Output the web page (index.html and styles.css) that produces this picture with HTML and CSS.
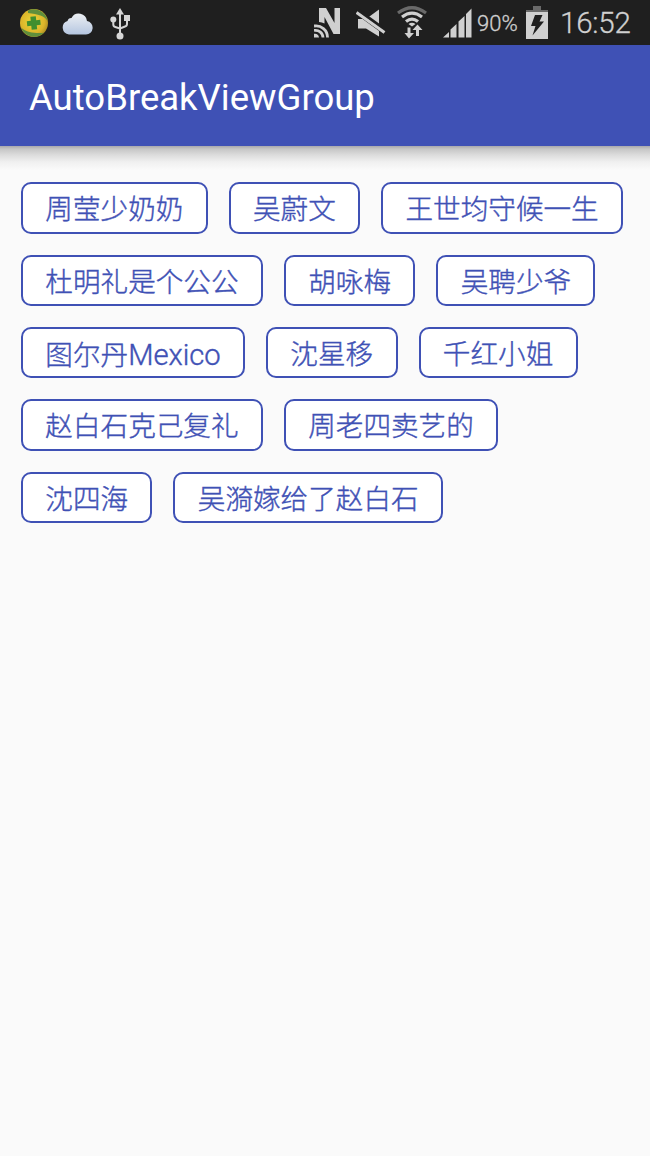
FILE: index.html
```
<!DOCTYPE html>
<html lang="zh-CN">

<head>
    <meta charset="UTF-8">
    <meta name="viewport" content="width=device-width, initial-scale=1.0">
    <title>AutoBreakViewGroup</title>
    <link rel="stylesheet" href="styles.css">
</head>

<body>

    <div class="status-bar">
        <div class="status-left">
            <svg class="icon-safe" width="28" height="28" viewBox="0 0 28 28">
                <defs>
                    <radialGradient id="safe" cx="0.45" cy="0.45" r="0.6">
                        <stop offset="0" stop-color="#e9d83a"/>
                        <stop offset="0.7" stop-color="#dcb52a"/>
                        <stop offset="1" stop-color="#a98a22"/>
                    </radialGradient>
                </defs>
                <circle cx="14" cy="14" r="14" fill="url(#safe)"/>
                <path d="M8 1.400A14 14 0 0 1 27.500 12C25 6.500 18 5.500 8 4z" fill="#5f8f3c"/>
                <path d="M1 18.500A14 14 0 0 0 24 23.800C17 24.500 7 24 1 18.500z" fill="#5f8f3c"/>
                <path d="M11 7.500h5.500v4h4v5h-4v4H11v-4H7v-5h4z" fill="#3f8f2f" transform="rotate(-6 14 14)"/>
            </svg>
            <svg class="icon-cloud" width="31" height="23" viewBox="0 0 31 23">
                <defs>
                    <linearGradient id="cloud" x1="0" y1="0" x2="0" y2="1">
                        <stop offset="0" stop-color="#eceff3"/>
                        <stop offset="1" stop-color="#b5c6e0"/>
                    </linearGradient>
                </defs>
                <path d="M7 22.500a7 7 0 0 1-1.500-13.600 4 4 0 0 1 4-3A8.300 8.300 0 0 1 25 9 6.800 6.800 0 0 1 24 22.500z" fill="url(#cloud)"/>
            </svg>
            <svg class="icon-usb" width="20" height="32" viewBox="0 0 20 32" fill="#d6d6d6">
                <path d="M10 0l4 6.500H6z"/>
                <path d="M10 5v22M3.300 11v5.500q0 2 2 2.500l4.700 1.500M17 10v6q0 2-2 2.500L10 20.500" fill="none" stroke="#d6d6d6" stroke-width="2"/>
                <circle cx="3.300" cy="11.500" r="3"/>
                <rect x="14" y="7" width="6" height="6"/>
                <circle cx="10" cy="28" r="3.500"/>
            </svg>
        </div>
        <div class="status-right">
            <svg class="icon-nfc" width="27" height="31" viewBox="0 0 27 31" fill="#d0d0d0">
                <path d="M5 1h7l8.500 15V1h5.500v26h-6.500L10.500 10v6.500Q8 15 5 15z"/>
                <g fill="none" stroke="#d0d0d0" stroke-width="2.800">
                    <path d="M0 19A11.500 11.500 0 0 1 13.500 30.500"/>
                    <path d="M0 23.500A7.500 7.500 0 0 1 9 30.500"/>
                </g>
                <path d="M0 26.800A4.500 4.500 0 0 1 5 30.500H0z"/>
            </svg>
            <svg class="icon-mute" width="30" height="28" viewBox="0 0 30 28">
                <path d="M2 10h8L23 0.500v27L10 19.500H2z" fill="#d0d0d0"/>
                <path d="M0 1.500L29 22.500" stroke="#1f1f1f" stroke-width="6"/>
                <path d="M0.500 3.500L28.500 23.500" stroke="#d0d0d0" stroke-width="3"/>
            </svg>
            <svg class="icon-wifi" width="30" height="33" viewBox="0 0 30 33">
                <g fill="none" stroke-width="3.200">
                    <path d="M1 7Q15-3.500 29 7" stroke="#6a6a6a"/>
                    <path d="M5 11Q15 3.300 25 11" stroke="#d0d0d0"/>
                    <path d="M9 15.500Q15 10.600 21 15.500" stroke="#d0d0d0"/>
                </g>
                <path d="M11.500 18Q15 15.500 18.500 18L15 20.500z" fill="#d0d0d0"/>
                <path d="M10.500 21.500h3V27H17l-5 5.500L7.500 27h3z" fill="#d0d0d0"/>
                <path d="M19 30v-6h-3.500l5-5.500 5 5.500H22v6z" fill="#d0d0d0"/>
            </svg>
            <svg class="icon-signal" width="29" height="30" viewBox="0 0 29 30" fill="#d0d0d0">
                <path d="M0 29.500L6 24v5.500zM7.500 29.500v-8l6-5.500v13.500zM15.500 29.500V13.500l6-5.500v21.500zM23 29.500V6l5.500-5.500v29z"/>
            </svg>
            <span class="percent">90%</span>
            <svg class="icon-battery" width="22" height="33" viewBox="0 0 22 33">
                <path d="M7 0h8v4h7v2H0V4h7z" fill="#6a6a6a"/>
                <rect y="6" width="22" height="27" fill="#d0d0d0"/>
                <path d="M9 9h7.500l-3 6.500H18L6.500 29.500l3-9.500H5z" fill="#1f1f1f"/>
            </svg>
            <span class="clock">16:52</span>
        </div>
    </div>

    <div class="app-bar">
        <h1>AutoBreakViewGroup</h1>
    </div>

    <div class="tags">
        <div class="tag">周莹少奶奶</div>
        <div class="tag">吴蔚文</div>
        <div class="tag">王世均守候一生</div>
        <div class="tag">杜明礼是个公公</div>
        <div class="tag">胡咏梅</div>
        <div class="tag">吴聘少爷</div>
        <div class="tag">图尔丹<span class="latin">Mexico</span></div>
        <div class="tag">沈星移</div>
        <div class="tag">千红小姐</div>
        <div class="tag">赵白石克己复礼</div>
        <div class="tag">周老四卖艺的</div>
        <div class="tag">沈四海</div>
        <div class="tag">吴漪嫁给了赵白石</div>
    </div>

</body>

</html>
```

FILE: styles.css
```
* {
    margin: 0;
    padding: 0;
    box-sizing: border-box;
}

body {
    min-height: 100vh;
    background-color: #fafafa;
    font-family: Roboto, "Noto Sans CJK SC", sans-serif;
}

.status-bar {
    height: 45px;
    padding: 0 19px 0 20px;
    display: flex;
    justify-content: space-between;
    background-color: #1f1f1f;
    color: #d0d0d0;
}

.status-left,
.status-right {
    display: flex;
    align-items: flex-start;
}

.icon-safe {
    margin-top: 9px;
}

.icon-cloud {
    margin: 12px 0 0 14px;
}

.icon-usb {
    margin: 8px 0 0 17px;
}

.icon-nfc {
    margin-top: 7px;
}

.icon-mute {
    margin: 9px 0 0 15px;
}

.icon-wifi {
    margin: 6px 0 0 11px;
}

.icon-signal {
    margin: 8px 0 0 16px;
}

.percent {
    width: 40px;
    margin: 0 9px 0 5px;
    font-size: 22px;
    font-weight: 300;
    line-height: 48px;
    white-space: nowrap;
    -webkit-text-stroke: 0.300px #d0d0d0;
}

.icon-battery {
    margin-top: 6px;
}

.clock {
    width: 71px;
    margin-left: 12px;
    font-size: 29.500px;
    font-weight: 300;
    letter-spacing: -0.200px;
    line-height: 46px;
    white-space: nowrap;
    -webkit-text-stroke: 0.300px #d0d0d0;
}

.app-bar {
    height: 101px;
    padding-left: 29px;
    display: flex;
    align-items: center;
    background-color: #3f51b5;
}

h1 {
    padding-top: 3px;
    color: white;
    font-size: 36.500px;
    font-weight: normal;
}

/* the gradient is the shadow under the app bar */
.tags {
    padding: 36.400px 21px;
    display: flex;
    flex-wrap: wrap;
    gap: 21px;
    background: linear-gradient(#a8a8ac 0, #c6c6c6 3px, #dcdcdc 9px, #f0f0f0 16px, #fafafa 24px);
}

.tag {
    height: 51.300px;
    padding: 0 22.350px;
    border: 2px solid #3f51b5;
    border-radius: 10px;
    background-color: white;
    color: #3f51b5;
    font-size: 27.600px;
    font-weight: 300;
    line-height: 52px;
    white-space: nowrap;
    -webkit-text-stroke: 0.400px #3f51b5;
}

.latin {
    font-size: 29.200px;
}
```
